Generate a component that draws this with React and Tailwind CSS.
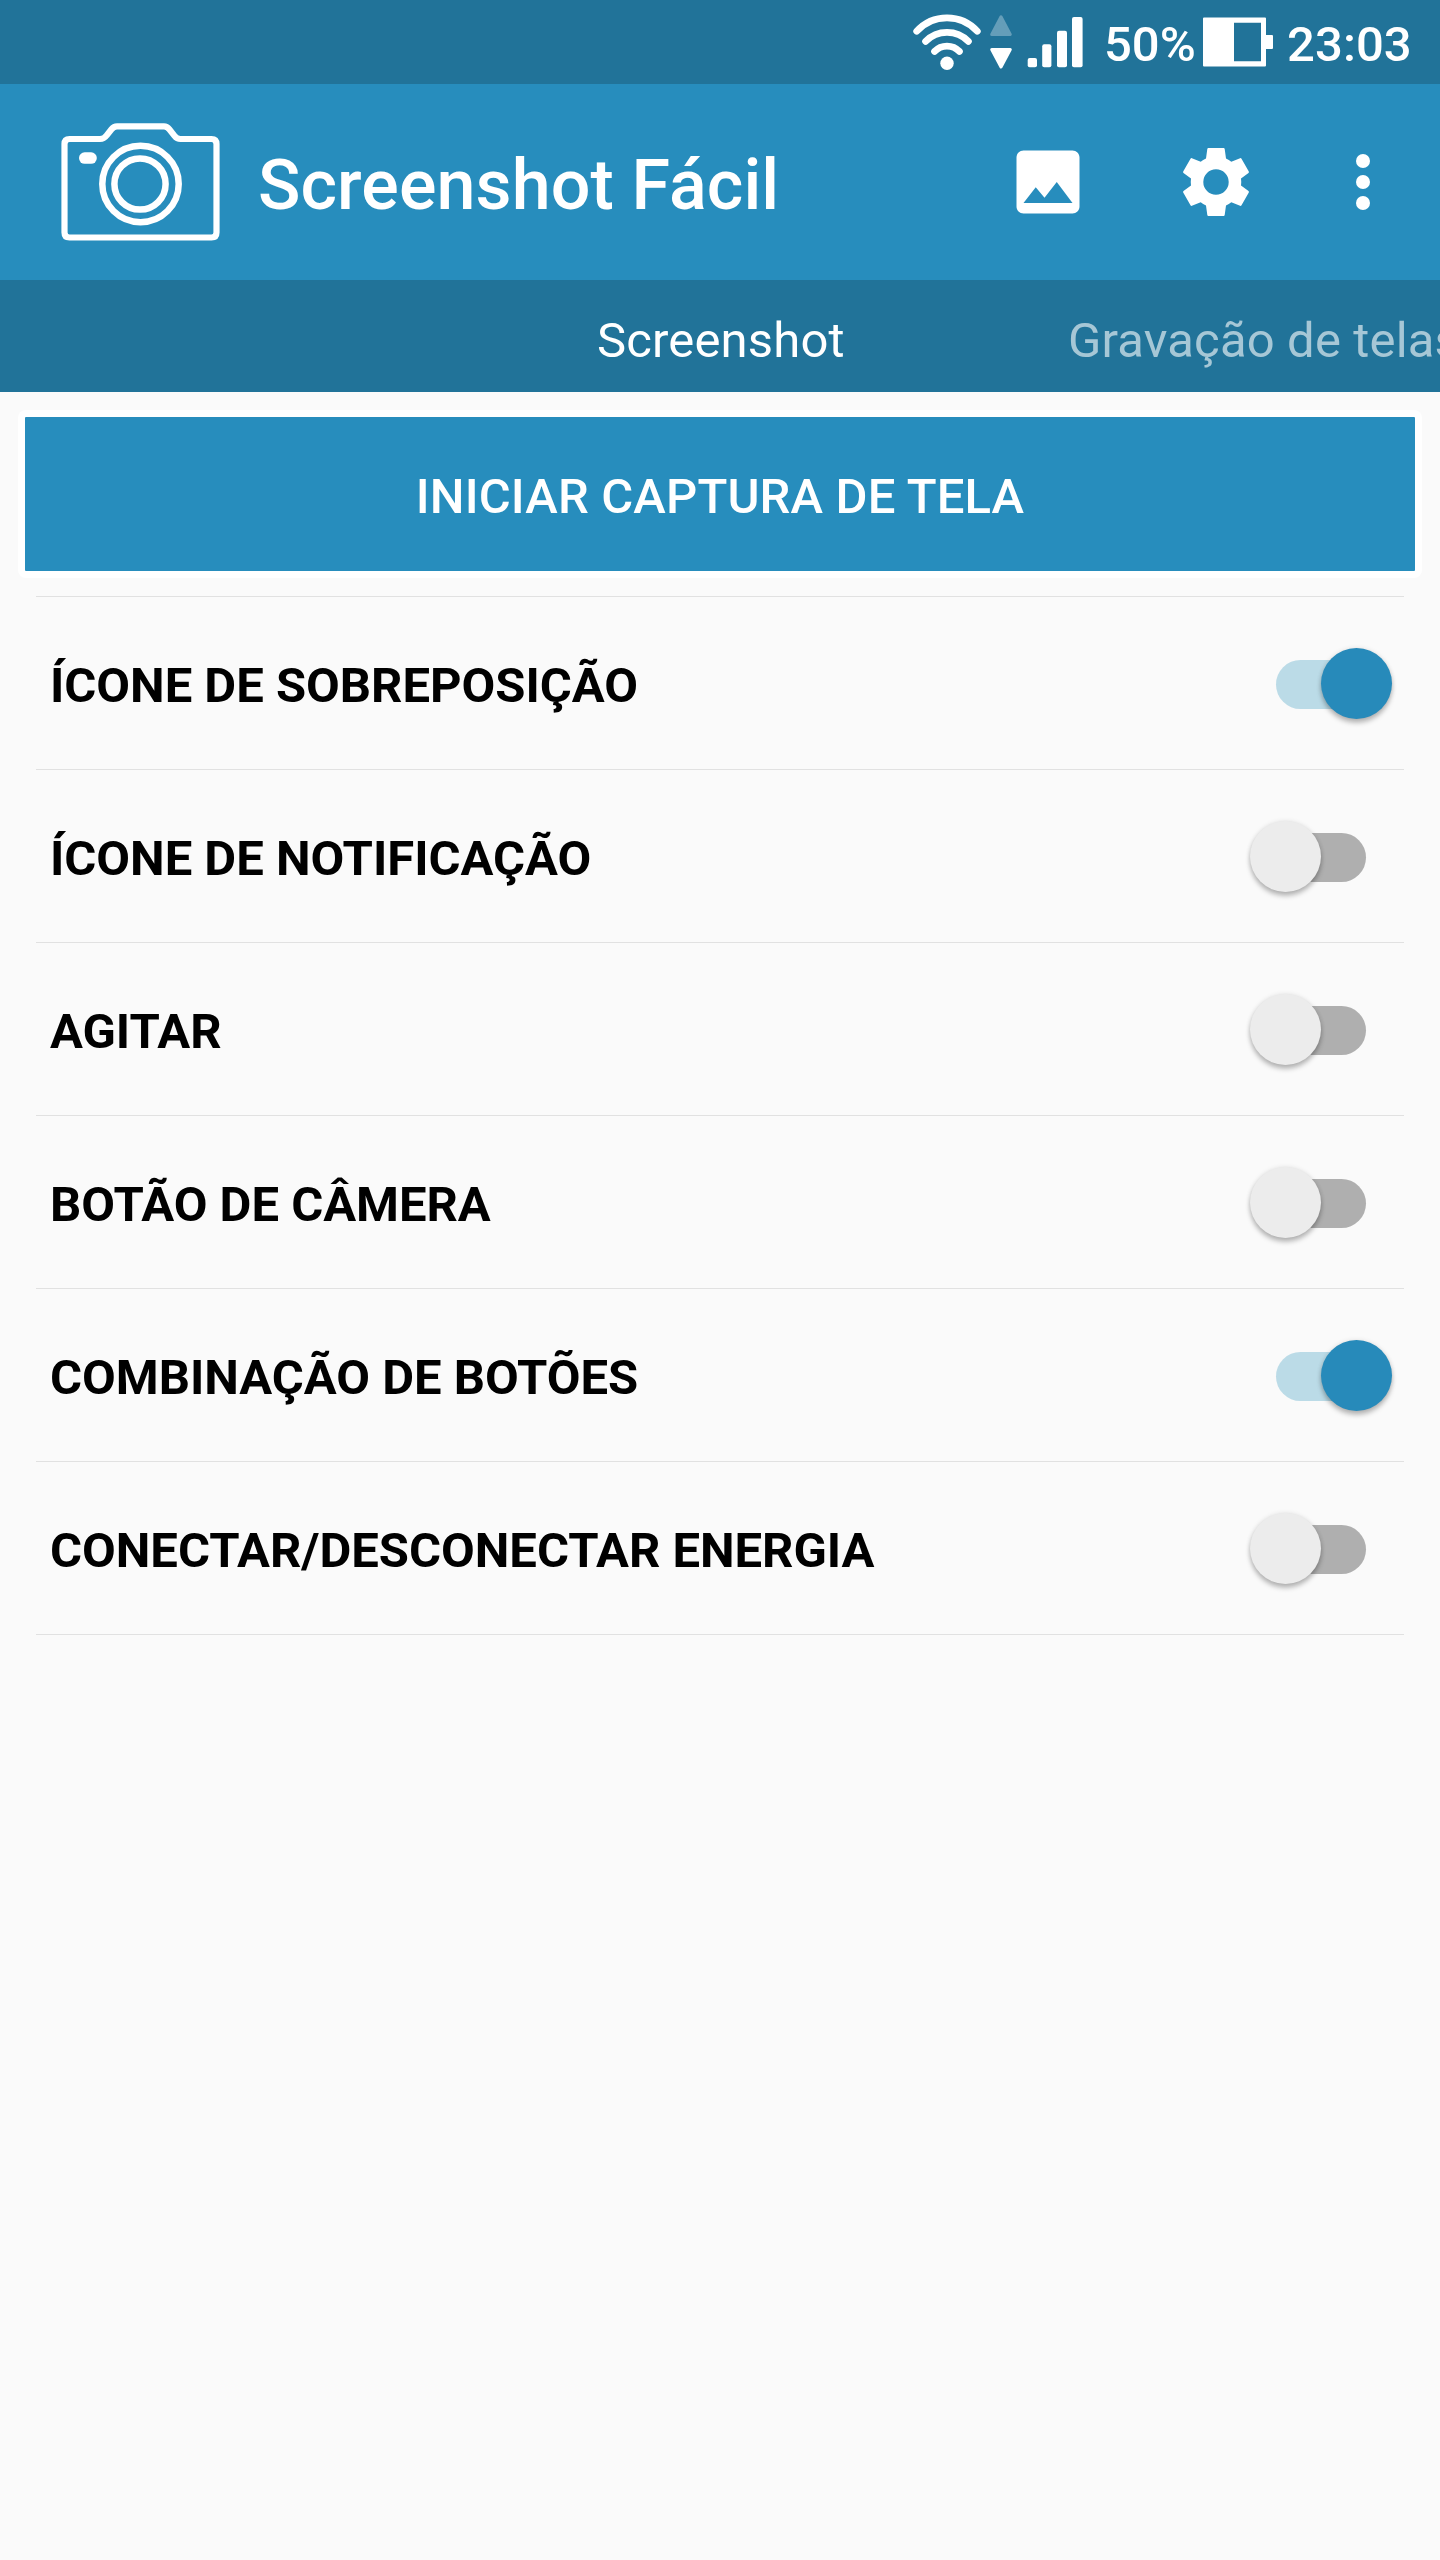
const ROWS = [
  { label: 'ÍCONE DE SOBREPOSIÇÃO', on: true },
  { label: 'ÍCONE DE NOTIFICAÇÃO', on: false },
  { label: 'AGITAR', on: false },
  { label: 'BOTÃO DE CÂMERA', on: false },
  { label: 'COMBINAÇÃO DE BOTÕES', on: true },
  { label: 'CONECTAR/DESCONECTAR ENERGIA', on: false },
];

function WifiIcon() {
  return (
    <svg width="70" height="84" viewBox="912 0 70 84" fill="none" stroke="#fff" strokeWidth="6.8" strokeLinecap="round">
      <path d="M916.7 31.2A41 41 0 0 1 977.3 31.2" />
      <path d="M925.6 41.3A30 30 0 0 1 968.4 41.3" />
      <path d="M934.6 51.4A17 17 0 0 1 959.4 51.4" />
      <circle cx="947" cy="63.2" r="6.7" fill="#fff" stroke="none" />
    </svg>
  );
}

function DataArrows() {
  return (
    <svg width="24" height="84" viewBox="989 0 24 84" strokeWidth="3" strokeLinejoin="round">
      <path d="M1001 16.8L1010.3 34.4H991.7Z" fill="#659eb9" stroke="#659eb9" />
      <path d="M1001 67L1010.3 49.5H991.7Z" fill="#fff" stroke="#fff" />
    </svg>
  );
}

function SignalIcon() {
  return (
    <svg width="56" height="84" viewBox="1027 0 56 84" fill="#fff">
      <rect x="1027.7" y="58" width="9.3" height="9.2" rx="2" />
      <rect x="1042.2" y="44.3" width="9.2" height="22.9" rx="2" />
      <rect x="1057" y="30.8" width="10" height="36.4" rx="2" />
      <rect x="1072" y="17" width="10.6" height="50.2" rx="2" />
    </svg>
  );
}

function BatteryIcon() {
  return (
    <svg width="70" height="84" viewBox="1203 0 70 84" fill="#fff">
      <path fillRule="evenodd" d="M1204 17.5H1265Q1266 17.5 1266 18.5V35H1272Q1273 35 1273 36V48Q1273 49 1272 49H1266V65.5Q1266 66.5 1265 66.5H1204Q1203 66.5 1203 65.5V18.5Q1203 17.5 1204 17.5ZM1234 22.7V61.3H1261V22.7Z" />
    </svg>
  );
}

function CameraLogo() {
  return (
    <svg width="160" height="120" viewBox="61 122 160 120" fill="none" stroke="#fff" strokeWidth="6.2">
      <path d="M69.5 139H100Q104 139 106.5 135.5L111.5 129.2Q113.8 126.4 117 126.4H164Q167 126.4 169.3 129.2L174.5 135.8Q177 139 180.5 139H211.5Q216.5 139 216.5 144V232.5Q216.5 237.5 211.5 237.5H69.5Q64.5 237.5 64.5 232.5V144Q64.5 139 69.5 139Z" />
      <circle cx="140.5" cy="184" r="38.2" strokeWidth="6.5" />
      <circle cx="140" cy="184" r="25.6" strokeWidth="6.5" />
      <rect x="79" y="152.3" width="17.8" height="11.5" rx="5.7" fill="#fff" stroke="none" />
    </svg>
  );
}

function GalleryIcon() {
  return (
    <svg width="84" height="84" viewBox="0 0 24 24" fill="#fff">
      <path d="M21 19V5c0-1.1-.9-2-2-2H5c-1.1 0-2 .9-2 2v14c0 1.1.9 2 2 2h14c1.1 0 2-.9 2-2zM8.5 13.5l2.5 3.01L14.5 12l4.5 6H5l3.5-4.5z" />
    </svg>
  );
}

function GearIcon() {
  return (
    <svg width="84" height="84" viewBox="-42 -42 84 84" fill="#fff">
      <path
        fillRule="evenodd"
        d="M-7.6-34H7.6Q8.5-34 8.7-33L10-23.5Q13-22.2 15.3-20.2L24.1-23.8Q25-24.2 25.5-23.2L32.8-10.5Q33.2-9.7 32.5-9.1L25-3.5Q25.5 0 25 3.5L32.5 9.1Q33.2 9.7 32.8 10.5L25.5 23.2Q25 24.2 24.1 23.8L15.3 20.2Q13 22.2 10 23.5L8.7 33Q8.5 34 7.6 34H-7.6Q-8.5 34-8.7 33L-10 23.5Q-13 22.2-15.3 20.2L-24.1 23.8Q-25 24.2-25.5 23.2L-32.8 10.5Q-33.2 9.7-32.5 9.1L-25 3.5Q-25.5 0-25-3.5L-32.5-9.1Q-33.2-9.7-32.8-10.5L-25.5-23.2Q-25-24.2-24.1-23.8L-15.3-20.2Q-13-22.2-10-23.5L-8.7-33Q-8.5-34-7.6-34ZM0-12.7A12.7 12.7 0 1 0 0 12.7A12.7 12.7 0 1 0 0-12.7Z"
      />
    </svg>
  );
}

function Toggle({ on }) {
  return (
    <span className={`mt-[3px] flex h-[49px] w-[90px] items-center rounded-full ${on ? 'justify-end bg-[#bbdbe7]' : 'justify-start bg-[#afafaf]'}`}>
      <span
        className={`-mt-[2px] size-[71px] shrink-0 rounded-full shadow-[0_4px_5px_rgba(0,0,0,0.26),0_0_5px_rgba(0,0,0,0.1)] ${on ? '-mr-[26px] bg-[#278aba]' : '-ml-[26px] bg-[#ececec]'}`}
      />
    </span>
  );
}

export default function App() {
  return (
    <div className="flex h-[2560px] w-[1440px] flex-col overflow-hidden bg-[#fafafa] font-['Roboto',sans-serif] text-[49px] leading-none text-white">
      <div className="flex h-[84px] shrink-0 items-center bg-[#217399] pl-[912px] font-medium">
        <WifiIcon />
        <div className="ml-[7px]"><DataArrows /></div>
        <div className="ml-[14px]"><SignalIcon /></div>
        <span className="ml-[21px] w-[99px] whitespace-nowrap pt-[5px]">50%</span>
        <BatteryIcon />
        <span className="ml-[14px] whitespace-nowrap pt-[5px] tracking-[0.1px]">23:03</span>
      </div>

      <header className="flex h-[196px] shrink-0 items-center bg-[#278dbd] pl-[61px]">
        <CameraLogo />
        <h1 className="ml-[37px] w-[748px] whitespace-nowrap pt-[6px] text-[70px] font-medium tracking-[0.1px]">Screenshot Fácil</h1>
        <GalleryIcon />
        <div className="ml-[84px]"><GearIcon /></div>
        <div className="ml-[98px] flex flex-col gap-[7px]">
          <span className="size-[14px] rounded-full bg-white" />
          <span className="size-[14px] rounded-full bg-white" />
          <span className="size-[14px] rounded-full bg-white" />
        </div>
      </header>

      <nav className="flex h-[112px] shrink-0 items-center overflow-hidden bg-[#217399] pl-[597px] pt-[9px] tracking-[0.15px]">
        <span className="w-[471px] shrink-0 whitespace-nowrap">Screenshot</span>
        <span className="shrink-0 whitespace-nowrap text-[#a6c7d6]">Gravação de telas</span>
      </nav>

      <div className="mx-[18px] mt-[18px] h-[168px] shrink-0 rounded-[8px] bg-white p-[7px]">
        <button className="flex h-full w-full items-center justify-center rounded-[1px] bg-[#278dbd] pt-[5px] font-medium tracking-[0.14px]">
          INICIAR CAPTURA DE TELA
        </button>
      </div>

      <ul className="mx-[36px] mt-[18px] border-t border-[#e1e1e1] text-black">
        {ROWS.map((row) => (
          <li key={row.label} className="flex h-[173px] items-center justify-between border-b border-[#e1e1e1] pl-[14px] pr-[38px]">
            <span className="whitespace-nowrap pt-[5px] font-bold tracking-[-0.02px]">{row.label}</span>
            <Toggle on={row.on} />
          </li>
        ))}
      </ul>
    </div>
  );
}
